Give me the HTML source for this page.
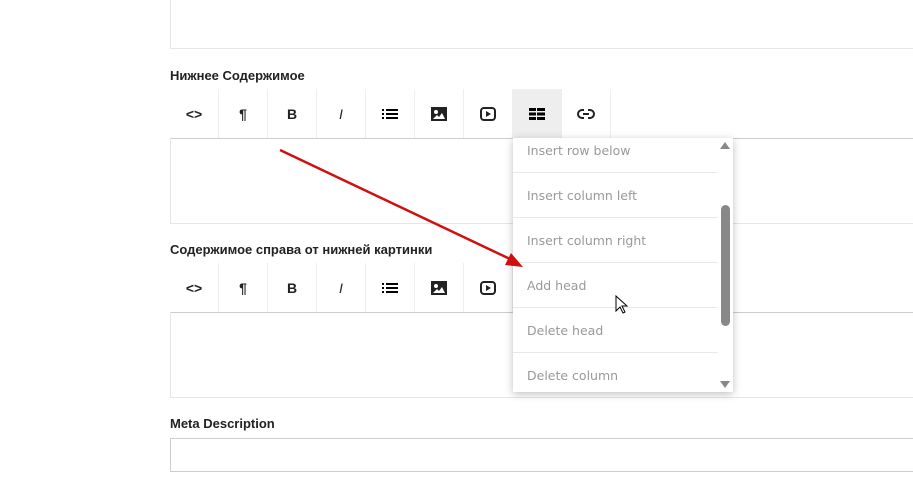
<html><head><style>
body{margin:0;width:913px;height:478px;background:#fff;position:relative;overflow:hidden;font-family:"Liberation Sans",sans-serif}
.box{position:absolute;left:170px;width:760px;border:1px solid #e6e6e6;box-sizing:border-box}
.lbl{position:absolute;left:170px;font-size:13px;font-weight:bold;color:#222}
.tb{position:absolute;left:170px;width:760px;height:50px;border-bottom:1px solid #ccc;box-sizing:border-box}
.tb div{position:absolute;top:0;width:48px;height:49px;border-right:1px solid #eee;display:flex;align-items:center;justify-content:center;font-size:14px;font-weight:bold;color:#222}
.dd{position:absolute;left:513px;top:138px;width:220px;height:254px;background:#fff;box-shadow:0 2px 8px rgba(0,0,0,.25);overflow:hidden}
.it{position:absolute;left:0;width:205px;height:45px;border-bottom:1px solid #e8e8e8;color:#999;line-height:45px;padding-left:14px;box-sizing:border-box;font-family:"DejaVu Sans",sans-serif;font-size:12.5px}
</style></head><body>
<div class="box" style="top:-2px;height:51px"></div>
<div class="lbl" style="top:68px">Нижнее Содержимое</div>
<div class="tb" style="top:89px" id="t1"></div>
<div class="box" style="top:138px;height:86px;border-top:none"></div>
<div class="lbl" style="top:242px">Содержимое справа от нижней картинки</div>
<div class="tb" style="top:263px" id="t2"></div>
<div class="box" style="top:312px;height:86px;border-top:none"></div>
<div class="lbl" style="top:416px">Meta Description</div>
<div class="box" style="top:438px;height:34px;border-color:#ccc"></div>
<div class="dd">
<div class="it" style="top:-10px">Insert row below</div>
<div class="it" style="top:35px">Insert column left</div>
<div class="it" style="top:80px">Insert column right</div>
<div class="it" style="top:125px">Add head</div>
<div class="it" style="top:170px">Delete head</div>
<div class="it" style="top:215px;border:none">Delete column</div>
<div style="position:absolute;left:208px;top:67px;width:9px;height:121px;background:#888;border-radius:5px"></div>
<div style="position:absolute;left:207px;top:4px;width:0;height:0;border:5px solid transparent;border-bottom:7px solid #888;border-top:none"></div>
<div style="position:absolute;left:207px;top:243px;width:0;height:0;border:5px solid transparent;border-top:7px solid #888;border-bottom:none"></div>
</div>
<svg style="position:absolute;left:0;top:0" width="913" height="478"><line x1="280" y1="150" x2="510" y2="259" stroke="#d01010" stroke-width="2.5"/><polygon points="523,267 505,265 511,253" fill="#d01010"/></svg>
<svg style="position:absolute;left:615px;top:295px" width="14" height="20"><path d="M1 1 L1 16 L5 12 L8 18 L10 17 L7 11 L12 11 Z" fill="#fff" stroke="#000" stroke-width="1"/></svg>
<script>
var ic=['&lt;&gt;','¶','B','<i style="font-weight:normal">I</i>','<svg width="16" height="12"><rect x="0" y="1" width="2" height="2"/><rect x="4" y="1" width="12" height="2"/><rect x="0" y="5" width="2" height="2"/><rect x="4" y="5" width="12" height="2"/><rect x="0" y="9" width="2" height="2"/><rect x="4" y="9" width="12" height="2"/></svg>','<svg width="16" height="14"><rect width="16" height="14" fill="#222"/><circle cx="5" cy="5" r="2" fill="#fff"/><path d="M2 12 L6 8 L8 10 L11 6 L14 12Z" fill="#fff"/></svg>','<svg width="16" height="14"><rect x="1" y="1" width="14" height="12" rx="3" fill="none" stroke="#222" stroke-width="2"/><path d="M6 4 L11 7 L6 10Z" fill="#222"/></svg>','<svg width="16" height="12"><rect x="0" y="0" width="7" height="3"/><rect x="8" y="0" width="8" height="3"/><rect x="0" y="4.5" width="7" height="3"/><rect x="8" y="4.5" width="8" height="3"/><rect x="0" y="9" width="7" height="3"/><rect x="8" y="9" width="8" height="3"/></svg>','<svg width="18" height="10"><path d="M7 1 H5 a4 4 0 0 0 0 8 H7 M11 1 H13 a4 4 0 0 1 0 8 H11 M6 5 H12" fill="none" stroke="#222" stroke-width="2"/></svg>'];
['t1','t2'].forEach(function(id,k){var h='';var n=k?7:9;for(var i=0;i<n;i++){h+='<div style="left:'+(i*49)+'px;'+(i==7&&!k?'background:#eee;':'')+'">'+ic[i]+'</div>'}document.getElementById(id).innerHTML=h});
</script>
</body></html>
